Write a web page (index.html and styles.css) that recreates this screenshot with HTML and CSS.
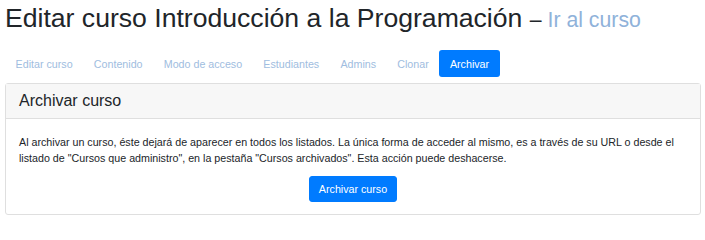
FILE: index.html
```html
<!DOCTYPE html>
<html lang="es">
<head>
<meta charset="utf-8">
<title>Editar curso</title>
<link rel="stylesheet" href="styles.css">
</head>
<body>
<div class="page">
  <h1 class="title">Editar curso Introducción a la Programación <small class="sub">– <a class="sub-link" href="#">Ir al curso</a></small></h1>
  <nav class="pills">
    <a class="pill" href="#">Editar curso</a>
    <a class="pill" href="#">Contenido</a>
    <a class="pill" href="#">Modo de acceso</a>
    <a class="pill" href="#">Estudiantes</a>
    <a class="pill" href="#">Admins</a>
    <a class="pill" href="#">Clonar</a>
    <a class="pill active" href="#">Archivar</a>
  </nav>
  <section class="card">
    <h2 class="card-header">Archivar curso</h2>
    <div class="card-body">
      <p class="text">Al archivar un curso, éste dejará de aparecer en todos los listados. La única forma de acceder al mismo, es a través de su URL o desde el listado de "Cursos que administro", en la pestaña "Cursos archivados". Esta acción puede deshacerse.</p>
      <div class="actions">
        <button class="btn" type="button">Archivar curso</button>
      </div>
    </div>
  </section>
</div>
</body>
</html>
```
FILE: styles.css
```css
html, body {
  margin: 0;
  padding: 0;
  background: #fff;
}
body {
  font-family: "Liberation Sans", Arial, sans-serif;
  color: #212529;
}
.page {
  padding: 3px 4px 0 5px;
}
.title {
  margin: 0;
  font-size: 26.6px;
  font-weight: 400;
  line-height: 1.2;
  color: #212529;
}
.sub {
  font-size: 80%;
  font-weight: 400;
}
.sub-link {
  color: #8fb2da;
  text-decoration: none;
}
.pills {
  display: flex;
  margin-top: 15.5px;
  padding-left: 0;
}
.pill {
  display: block;
  font-size: 10.7px;
  line-height: 16px;
  padding: 5.5px 10.6px;
  color: #a0bde0;
  text-decoration: none;
  border-radius: 3px;
}
.pill.active {
  background: #007bff;
  color: #fff;
}
.card {
  margin-top: 6px;
  border: 1px solid #dfdfdf;
  border-radius: 3px;
  background: #fff;
}
.card-header {
  margin: 0;
  padding: 7px 13px;
  font-size: 16px;
  font-weight: 400;
  line-height: 1.2;
  background: #f7f7f7;
  border-bottom: 1px solid #dfdfdf;
}
.card-body {
  padding: 15px 13px 12px;
}
.text {
  margin: 0;
  font-size: 10.7px;
  line-height: 16px;
}
.actions {
  display: flex;
  justify-content: center;
  margin-top: 10px;
}
.btn {
  font-family: "Liberation Sans", Arial, sans-serif;
  font-size: 10.7px;
  line-height: 16px;
  padding: 4px 9px;
  color: #fff;
  background: #007bff;
  border: 1px solid #007bff;
  border-radius: 3px;
}
```
